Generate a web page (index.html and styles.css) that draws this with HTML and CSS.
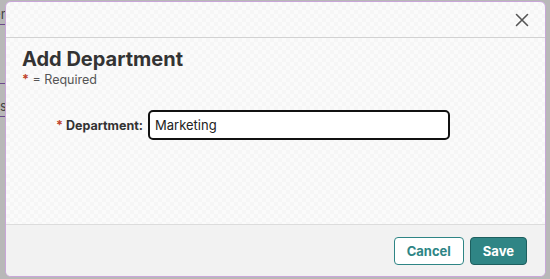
FILE: index.html
```html
<!DOCTYPE html>
<html lang="en">
<head>
    <meta charset="UTF-8">
    <meta name="viewport" content="width=device-width, initial-scale=1.0">
    <title>Add Department</title>
    <link rel="stylesheet" href="styles.css">
</head>
<body>

<!-- page behind the modal -->
<div class="backdrop">
    <a href="#" class="bg-link first">Departments</a>
    <a href="#" class="bg-link">Locations</a>
    <a href="#" class="bg-link">Employees</a>
</div>

<div class="modal">
    <div class="modal-header">
        <button class="close-btn" aria-label="Close">
            <svg width="14" height="14" viewBox="0 0 14 14">
                <path d="M1.5 1.5 L12.5 12.5 M12.5 1.5 L1.5 12.5" stroke="#555" stroke-width="1.6" stroke-linecap="round"/>
            </svg>
        </button>
    </div>

    <div class="modal-body">
        <h1>Add Department</h1>
        <p class="required-note"><span class="req">*</span> = Required</p>

        <!-- Form to add department -->
        <div class="form-group">
            <label for="department"><span class="req">*</span> Department:</label>
            <input type="text" id="department" value="Marketing">
        </div>
    </div>

    <div class="modal-footer">
        <button class="btn btn-cancel">Cancel</button>
        <button class="btn btn-save">Save</button>
    </div>
</div>

</body>
</html>
```

FILE: styles.css
```css
body {
    margin: 0;
    font-family: Inter, "Liberation Sans", sans-serif;
    background-color: #b8b8b8;
    height: 279px;
    overflow: hidden;
}
.backdrop {
    padding-top: 6px;
    display: flex;
    flex-direction: column;
}
.bg-link {
    color: #444;
    font-size: 13px;
    margin-left: -60px;
    margin-bottom: 14px;
    padding-bottom: 2px;
    border-bottom: 1px solid #6a4a8a;
    text-decoration: none;
    width: 66px;
}
.bg-link.first {
    margin-bottom: 40px;
}
.modal {
    position: absolute;
    left: 5px;
    top: 1px;
    width: 539px;
    height: 274px;
    border: 1px solid #c9a6d9;
    border-radius: 6px;
    background-color: #f9f9f9;
    background-image: repeating-conic-gradient(#f6f6f6 0% 25%, #fbfbfb 0% 50%);
    background-size: 8px 8px;
    display: flex;
    flex-direction: column;
    overflow: hidden;
}
.modal-header {
    height: 35px;
    border-bottom: 1px solid #d2d2d2;
    display: flex;
    justify-content: flex-end;
    align-items: center;
    padding-right: 12px;
}
.close-btn {
    background: none;
    border: none;
    padding: 4px;
    margin-top: 1px;
    cursor: pointer;
    display: flex;
}
.modal-body {
    flex: 1;
    padding: 8px 16px 0 16px;
}
h1 {
    font-size: 20px;
    font-weight: 700;
    color: #333;
    margin: 0;
    line-height: 26px;
}
.required-note {
    font-size: 12.5px;
    color: #555;
    margin: 0;
}
.req {
    color: #c0462b;
    font-weight: 700;
}
.form-group {
    display: flex;
    align-items: center;
    margin-top: 23px;
}
label {
    font-weight: bold;
    font-size: 12.5px;
    color: #333;
    width: 121px;
    text-align: right;
    margin-right: 5px;
}
input[type="text"] {
    width: 288px;
    height: 26px;
    padding: 0 5px;
    border: 2px solid #111;
    border-radius: 5px;
    font-family: inherit;
    font-size: 13px;
    color: #222;
    background: #fff;
    outline: none;
}
.modal-footer {
    height: 51px;
    border-top: 1px solid #dcdcdc;
    background-color: #f2f2f2;
    display: flex;
    justify-content: flex-end;
    align-items: center;
    gap: 6px;
    padding-right: 18px;
}
.btn {
    height: 28px;
    padding: 0 12px;
    border-radius: 4px;
    font-family: inherit;
    font-size: 13px;
    font-weight: bold;
    cursor: pointer;
}
.btn-cancel {
    background-color: #fff;
    color: #2e8585;
    border: 1px solid #2e8585;
}
.btn-save {
    background-color: #2f8585;
    color: #fff;
    border: 1px solid #1d5f5f;
}
```
